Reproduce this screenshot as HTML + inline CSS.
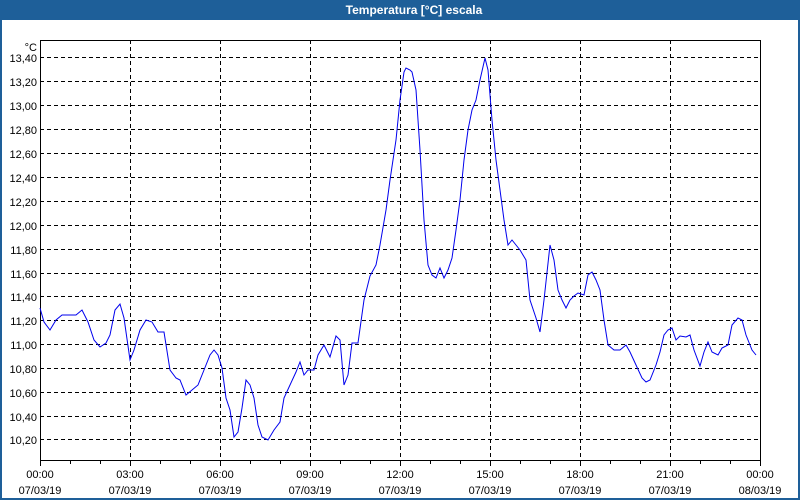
<!DOCTYPE html>
<html><head><meta charset="utf-8"><style>
html,body{margin:0;padding:0;width:800px;height:500px;overflow:hidden;background:#1e5f99}
.w{position:absolute;left:2px;top:20px;width:796px;height:478px;background:#fff}
.t{position:absolute;left:0;top:0;width:800px;height:20px;color:#fff;font:bold 12px "Liberation Sans",sans-serif;line-height:20px;text-align:center;padding-left:28px;box-sizing:border-box}
svg{position:absolute;left:0;top:0}
text{font-family:"Liberation Sans",sans-serif;font-size:11px;fill:#000}
</style></head><body>
<div class="t">Temperatura [°C] escala</div>
<div class="w"></div>
<svg width="800" height="500">
<g stroke="#000" stroke-dasharray="4,3" stroke-width="1">
<line x1="40" x2="760" y1="57.5" y2="57.5"/><line x1="40" x2="760" y1="81.5" y2="81.5"/><line x1="40" x2="760" y1="105.5" y2="105.5"/><line x1="40" x2="760" y1="129.5" y2="129.5"/><line x1="40" x2="760" y1="153.5" y2="153.5"/><line x1="40" x2="760" y1="177.5" y2="177.5"/><line x1="40" x2="760" y1="201.5" y2="201.5"/><line x1="40" x2="760" y1="225.5" y2="225.5"/><line x1="40" x2="760" y1="249.5" y2="249.5"/><line x1="40" x2="760" y1="273.5" y2="273.5"/><line x1="40" x2="760" y1="296.5" y2="296.5"/><line x1="40" x2="760" y1="320.5" y2="320.5"/><line x1="40" x2="760" y1="344.5" y2="344.5"/><line x1="40" x2="760" y1="368.5" y2="368.5"/><line x1="40" x2="760" y1="392.5" y2="392.5"/><line x1="40" x2="760" y1="416.5" y2="416.5"/><line x1="40" x2="760" y1="439.5" y2="439.5"/>
<line y1="40" y2="461" x1="130.5" x2="130.5"/><line y1="40" y2="461" x1="220.5" x2="220.5"/><line y1="40" y2="461" x1="310.5" x2="310.5"/><line y1="40" y2="461" x1="400.5" x2="400.5"/><line y1="40" y2="461" x1="490.5" x2="490.5"/><line y1="40" y2="461" x1="580.5" x2="580.5"/><line y1="40" y2="461" x1="670.5" x2="670.5"/>
</g>
<rect x="40.5" y="40.5" width="720" height="420" fill="none" stroke="#000"/>
<g stroke="#000">
<path d="M40.5 461v5M70.5 461v3M100.5 461v3M130.5 461v5M160.5 461v3M190.5 461v3M220.5 461v5M250.5 461v3M280.5 461v3M310.5 461v5M340.5 461v3M370.5 461v3M400.5 461v5M430.5 461v3M460.5 461v3M490.5 461v5M520.5 461v3M550.5 461v3M580.5 461v5M610.5 461v3M640.5 461v3M670.5 461v5M700.5 461v3M730.5 461v3M760.5 461v5"/>
</g>
<polyline fill="none" stroke="#0000ee" stroke-width="1" points="40,308 44,322 50,330 56,320 62,315 70,315 76,315 82,310 88,322 94,340 100,347 106,343 110,335 115,310 120,304 124,318 130,360 134,350 140,330 146,320 152,322 158,332 164,332 170,370 176,378 180,380 186,395 192,390 198,385 204,370 210,355 214,350 218,355 222,368 226,398 230,410 234,437 238,432 242,408 246,380 250,385 254,398 258,425 262,437 268,440 274,430 280,422 284,398 290,385 296,372 300,362 304,375 308,370 314,370 318,355 324,345 330,357 336,336 340,340 344,385 348,375 352,343 358,343 364,300 370,276 376,265 380,245 386,210 390,180 396,140 400,100 404,72 406,68 410,70 412,72 416,90 420,150 424,220 428,265 432,275 436,278 440,268 444,278 448,270 452,258 456,230 460,200 464,160 468,130 472,110 476,100 480,80 485,58 488,70 492,120 496,160 500,190 504,220 508,245 512,240 516,245 520,250 526,260 530,300 536,318 540,332 544,300 550,245 554,260 558,290 562,300 566,308 570,300 574,296 578,293 584,295 588,275 592,272 596,280 600,290 604,320 608,345 614,350 620,350 626,345 630,352 636,365 642,378 646,382 650,380 656,365 660,352 664,335 668,330 672,328 676,340 680,336 686,337 690,335 694,350 700,366 704,352 708,342 712,352 718,355 722,348 728,345 732,325 738,318 742,320 746,335 752,350 756,355"/>
<g text-anchor="end">
<text x="37" y="51">°C</text>
<text x="37" y="62">13,40</text><text x="37" y="86">13,20</text><text x="37" y="110">13,00</text><text x="37" y="134">12,80</text><text x="37" y="158">12,60</text><text x="37" y="182">12,40</text><text x="37" y="206">12,20</text><text x="37" y="230">12,00</text><text x="37" y="254">11,80</text><text x="37" y="278">11,60</text><text x="37" y="301">11,40</text><text x="37" y="325">11,20</text><text x="37" y="349">11,00</text><text x="37" y="373">10,80</text><text x="37" y="397">10,60</text><text x="37" y="421">10,40</text><text x="37" y="444">10,20</text>
</g>
<g text-anchor="middle">
<text x="40" y="478">00:00</text><text x="40" y="494">07/03/19</text>
<text x="130" y="478">03:00</text><text x="130" y="494">07/03/19</text>
<text x="220" y="478">06:00</text><text x="220" y="494">07/03/19</text>
<text x="310" y="478">09:00</text><text x="310" y="494">07/03/19</text>
<text x="400" y="478">12:00</text><text x="400" y="494">07/03/19</text>
<text x="490" y="478">15:00</text><text x="490" y="494">07/03/19</text>
<text x="580" y="478">18:00</text><text x="580" y="494">07/03/19</text>
<text x="670" y="478">21:00</text><text x="670" y="494">07/03/19</text>
<text x="760" y="478">00:00</text><text x="760" y="494">08/03/19</text>
</g>
</svg>
</body></html>
